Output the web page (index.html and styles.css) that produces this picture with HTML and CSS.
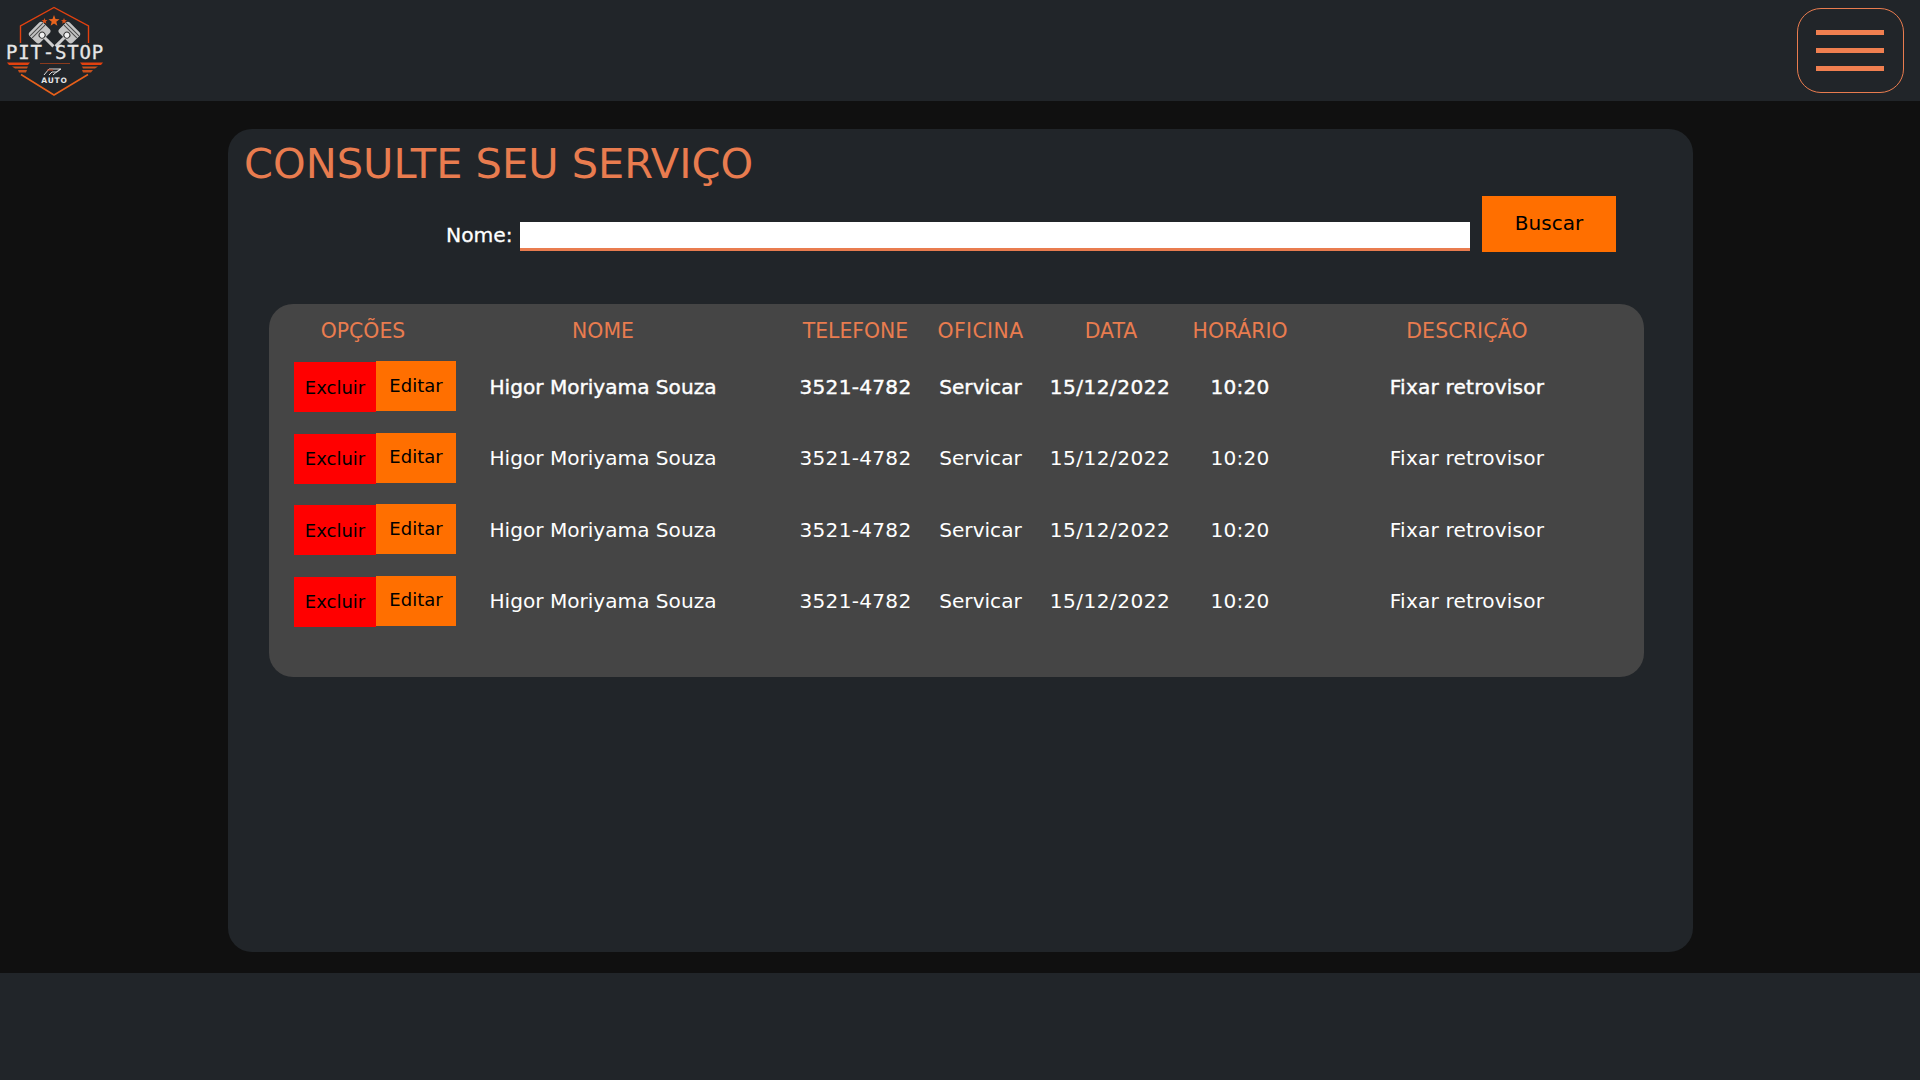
FILE: index.html
```html
<!DOCTYPE html>
<html lang="pt-BR">
<head>
  <meta charset="UTF-8">
  <title>Consulte seu serviço</title>
  <link rel="stylesheet" href="styles.css">
</head>
<body>
<header class="topo">
  <a class="logo" href="#">
    <svg viewBox="0 0 110 100" width="110" height="100">
      <!-- hexagono -->
      <path d="M20.500 42V25L54 6.500 88.500 25v17" fill="none" stroke="#e2410f" stroke-width="1.400"/>
      <path d="M21 73.500L54 94l34-20.500" fill="none" stroke="#e8601a" stroke-width="1.500"/>
      <!-- estrelas -->
      <path d="M54 14l1.500 4 4 .2-3.200 2.500 1.100 4L54 22.400l-3.400 2.300 1.100-4-3.200-2.500 4-.2z" fill="#e8641e"/>
      <path d="M44.500 17l.8 2.100 2.200.1-1.700 1.400.6 2.100-1.900-1.200-1.900 1.200.6-2.100-1.700-1.400 2.200-.1z" fill="#d9501a"/>
      <path d="M64 17l.8 2.100 2.200.1-1.700 1.400.6 2.100-1.900-1.200-1.900 1.200.6-2.100-1.700-1.400 2.200-.1z" fill="#d9501a"/>
      <!-- pistoes -->
      <g transform="rotate(-45 40 32)">
        <path d="M40 38v13" stroke="#cfcfcf" stroke-width="3"/>
        <rect x="30.500" y="24" width="19" height="15" rx="3" fill="#c4c4c4"/>
        <path d="M31 27h18M31 30h18" stroke="#4a4a4a" stroke-width="1"/>
        <circle cx="40" cy="35" r="3" fill="#f0f0f0" stroke="#333"/>
      </g>
      <g transform="rotate(45 69 32)">
        <path d="M69 38v13" stroke="#cfcfcf" stroke-width="3"/>
        <rect x="59.500" y="24" width="19" height="15" rx="3" fill="#c4c4c4"/>
        <path d="M60 27h18M60 30h18" stroke="#4a4a4a" stroke-width="1"/>
        <circle cx="69" cy="35" r="3" fill="#f0f0f0" stroke="#333"/>
      </g>
      <!-- faixas -->
      <path d="M7 61.500h23l-2 2.500H9z" fill="#e2410f"/>
      <path d="M103 61.500H80l2 2.500h19z" fill="#e2410f"/>
      <path d="M40 62.500h30" stroke="#8a3a1c" stroke-width="1"/>
      <path d="M12 65.500h16l-1 2H15z" fill="#c8501c"/>
      <path d="M98 65.500H82l1 2h12z" fill="#c8501c"/>
      <path d="M18 69h9l-1 2.500h-7z" fill="#c8501c"/>
      <path d="M93 69H82l1 2.500h8z" fill="#c8501c"/>
      <!-- marca -->
      <path d="M44 74l5-6h12l-4 3h-5l-3 3M53 74l7-6" fill="none" stroke="#ddd" stroke-width="1"/>
      <path d="M47 69h6" stroke="#c8401a" stroke-width="1"/>
      <text x="55" y="58" class="logo-nome">PIT-STOP</text>
      <text x="54.500" y="82" class="logo-auto">AUTO</text>
    </svg>
  </a>
  <button class="menu" type="button" aria-label="Menu">
    <span></span><span></span><span></span>
  </button>
</header>

<main class="conteudo">
  <section class="cartao">
    <h1 class="titulo">CONSULTE SEU SERVIÇO</h1>
    <form class="busca">
      <label class="busca-label" for="nome">Nome:</label>
      <input class="busca-input" id="nome" type="text">
      <button class="btn-buscar" type="button">Buscar</button>
    </form>
    <div class="painel">
      <table class="tabela">
        <thead>
          <tr>
            <th class="col-opcoes">OPÇÕES</th>
            <th class="col-nome">NOME</th>
            <th class="col-tel">TELEFONE</th>
            <th class="col-oficina">OFICINA</th>
            <th class="col-data">DATA</th>
            <th class="col-hora">HORÁRIO</th>
            <th class="col-desc">DESCRIÇÃO</th>
          </tr>
        </thead>
        <tbody>
          <tr class="linha-ativa">
            <td><div class="acoes"><button class="btn-excluir" type="button">Excluir</button><button class="btn-editar" type="button">Editar</button></div></td>
            <td class="col-nome">Higor Moriyama Souza</td>
            <td class="col-tel">3521-4782</td>
            <td>Servicar</td>
            <td class="col-data">15/12/2022</td>
            <td class="col-hora">10:20</td>
            <td class="col-desc">Fixar retrovisor</td>
          </tr>
          <tr>
            <td><div class="acoes"><button class="btn-excluir" type="button">Excluir</button><button class="btn-editar" type="button">Editar</button></div></td>
            <td class="col-nome">Higor Moriyama Souza</td>
            <td class="col-tel">3521-4782</td>
            <td>Servicar</td>
            <td class="col-data">15/12/2022</td>
            <td class="col-hora">10:20</td>
            <td class="col-desc">Fixar retrovisor</td>
          </tr>
          <tr>
            <td><div class="acoes"><button class="btn-excluir" type="button">Excluir</button><button class="btn-editar" type="button">Editar</button></div></td>
            <td class="col-nome">Higor Moriyama Souza</td>
            <td class="col-tel">3521-4782</td>
            <td>Servicar</td>
            <td class="col-data">15/12/2022</td>
            <td class="col-hora">10:20</td>
            <td class="col-desc">Fixar retrovisor</td>
          </tr>
          <tr>
            <td><div class="acoes"><button class="btn-excluir" type="button">Excluir</button><button class="btn-editar" type="button">Editar</button></div></td>
            <td class="col-nome">Higor Moriyama Souza</td>
            <td class="col-tel">3521-4782</td>
            <td>Servicar</td>
            <td class="col-data">15/12/2022</td>
            <td class="col-hora">10:20</td>
            <td class="col-desc">Fixar retrovisor</td>
          </tr>
        </tbody>
      </table>
    </div>
  </section>
</main>

<footer class="rodape"></footer>
</body>
</html>
```

FILE: styles.css
```css
* {
  box-sizing: border-box;
}

body {
  margin: 0;
  height: 1080px;
  display: flex;
  flex-direction: column;
  background: #101010;
  font-family: "DejaVu Sans", sans-serif;
  overflow: hidden;
}

/* Topo */
.topo {
  height: 101px;
  flex: none;
  background: #212529;
  display: flex;
  justify-content: space-between;
  align-items: center;
  padding: 0 16px 0 0;
}

.logo {
  display: block;
  height: 100px;
}

.logo-nome {
  font-family: "DejaVu Sans Mono", monospace;
  font-size: 19px;
  letter-spacing: 0.800px;
  fill: #e6e6e6;
  stroke: #e6e6e6;
  stroke-width: 0.300px;
  text-anchor: middle;
}

.logo-auto {
  font-family: "DejaVu Sans", sans-serif;
  font-size: 7.500px;
  font-weight: 700;
  letter-spacing: 0.800px;
  fill: #e6e6e6;
  text-anchor: middle;
}

.menu {
  width: 107px;
  height: 85px;
  padding: 0 1px 0 0;
  border: 1px solid #e97c4f;
  border-radius: 24px;
  background: transparent;
  display: flex;
  flex-direction: column;
  align-items: center;
  justify-content: center;
  gap: 13px;
}

.menu span {
  width: 68px;
  height: 5px;
  background: #f07f50;
}

/* Conteudo */
.conteudo {
  height: 872px;
  flex: none;
  padding: 28px 227px 21px 228px;
}

.cartao {
  height: 823px;
  background: #212529;
  border-radius: 24px;
  padding: 10px 40px 0 16px;
}

.titulo {
  margin: 0;
  color: #e97c4f;
  font-size: 41.500px;
  font-weight: 400;
  line-height: 50px;
}

.busca {
  display: flex;
  align-items: center;
  padding-left: 202px;
  height: 56px;
  margin-top: 7px;
}

.busca-label {
  width: 74px;
  flex: none;
  color: #fff;
  font-size: 20.300px;
  padding-top: 22px;
  -webkit-text-stroke: 0.300px #fff;
}

.busca-input {
  width: 950px;
  height: 29px;
  flex: none;
  margin-top: 24px;
  border: 0;
  border-bottom: 3px solid #e97c4f;
  background: #fff;
  outline: none;
}

.btn-buscar {
  width: 134px;
  height: 56px;
  flex: none;
  margin-left: 12px;
  padding: 0 0 2px;
  border: 0;
  background: #ff6f00;
  color: #000;
  font: inherit;
  font-size: 20px;
}

.painel {
  height: 373px;
  margin: 52px 0 0 25px;
  width: 1375px;
  background: #454545;
  border-radius: 24px;
}

/* Tabela */
.tabela {
  width: 100%;
  border-collapse: collapse;
  table-layout: fixed;
}

.tabela th {
  height: 47px;
  padding: 7px 0 0;
  color: #e97c4f;
  font-size: 20.400px;
  font-weight: 400;
}

.tabela td {
  height: 71.500px;
  padding: 0;
  color: #fff;
  font-size: 20.100px;
  text-align: center;
}

.linha-ativa td {
  -webkit-text-stroke: 0.400px #fff;
}

.tabela .col-opcoes {
  width: 190px;
  padding-right: 2px;
}

.col-oficina {
  width: 111px;
  letter-spacing: 0.400px;
}

.tabela .col-data {
  width: 148px;
  padding-left: 2px;
}

td.col-data {
  letter-spacing: 0.450px;
}

.tabela td.col-data {
  padding-left: 0;
}

.col-hora {
  width: 112px;
}

td.col-hora {
  letter-spacing: 0.250px;
}

.tabela .col-nome {
  width: 331px;
  padding-right: 43px;
}

.tabela .col-tel {
  width: 135px;
  padding-right: 4px;
}

td.col-tel {
  letter-spacing: 0.270px;
}

.tabela .col-desc {
  width: 348px;
  padding-right: 6px;
  letter-spacing: 0.200px;
}

.acoes {
  display: flex;
  align-items: flex-start;
  padding-left: 25px;
  -webkit-text-stroke: 0;
  letter-spacing: 0;
}

.btn-excluir,
.btn-editar {
  border: 0;
  padding: 0;
  color: #000;
  font: inherit;
  font-size: 18px;
}

.btn-excluir {
  width: 82px;
  height: 50px;
  margin-top: 1px;
  background: #ff0000;
}

.btn-editar {
  width: 80px;
  height: 50px;
  padding-bottom: 2px;
  background: #ff6f00;
}

.rodape {
  flex: 1;
  background: #212529;
}
```
